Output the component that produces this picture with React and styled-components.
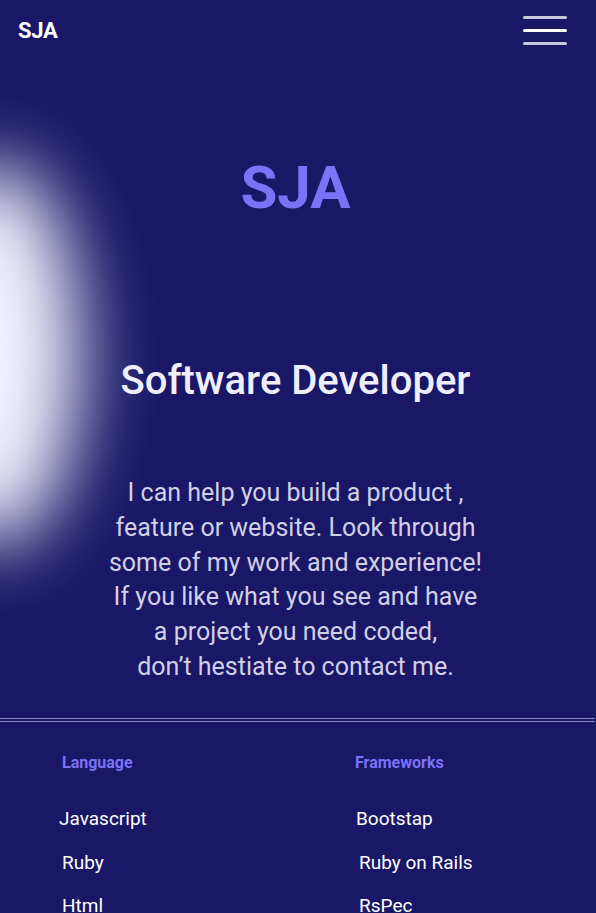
import React from "react";
import styled, { createGlobalStyle } from "styled-components";

const Global = createGlobalStyle`
  html, body { margin: 0; padding: 0; background: #1a1766; }
  body { font-family: Roboto, "Liberation Sans", sans-serif; overflow: hidden; }
  * { box-sizing: border-box; }
`;

const Page = styled.div`
  position: relative;
  width: 596px;
  min-height: 913px;
  background: #1a1766;
  overflow: hidden;
`;

const Header = styled.header`
  height: 60px;
  display: flex;
  align-items: center;
  justify-content: space-between;
  padding: 0 29px 0 18px;
  position: relative;
  z-index: 2;
`;

const Brand = styled.div`
  color: #ffffff;
  font-size: 22px;
  font-weight: 700;
  letter-spacing: -0.3px;
`;

const Burger = styled.button`
  background: none;
  border: 0;
  padding: 0;
  width: 44px;
  display: flex;
  flex-direction: column;
  gap: 10px;
  margin-top: 1px;
`;

const Bar = styled.span`
  display: block;
  height: 3px;
  border-radius: 2px;
  background: ${(p) => (p.$bright ? "#ffffff" : "#c9c9de")};
`;

const Hero = styled.section`
  position: relative;
  text-align: center;
  padding: 96px 5px 0 0;
  height: 658px;
`;

const Glow = styled.div`
  position: absolute;
  left: -92px;
  top: 102px;
  width: 172px;
  height: 385px;
  border-radius: 50%;
  background: #f2f2ff;
  filter: blur(38px);
  z-index: 0;
`;

const Title = styled.h1`
  position: relative;
  margin: 0;
  color: #7b73f6;
  font-size: 60px;
  font-weight: 700;
  line-height: 64px;
`;

const Role = styled.h2`
  position: relative;
  margin: 138px 0 0;
  color: #efeefe;
  font-size: 40px;
  font-weight: 500;
  line-height: 46px;
`;

const Intro = styled.p`
  position: relative;
  margin: 72px auto 0;
  color: #d1d0e6;
  font-size: 25px;
  line-height: 34.8px;
`;

const Divider = styled.hr`
  margin: 0;
  border: 0;
  height: 4px;
  width: 595px;
  border-top: 1px solid #8a88b0;
  border-bottom: 1px solid #8a88b0;
`;

const Skills = styled.section`
  display: grid;
  grid-template-columns: 293px 1fr;
  padding: 31px 0 0 59px;
`;

const Column = styled.div`
  display: flex;
  flex-direction: column;
`;

const Heading = styled.h3`
  margin: 0 0 0 3px;
  color: #7b73f6;
  font-size: 16px;
  font-weight: 700;
  line-height: 20px;
`;

const List = styled.ul`
  list-style: none;
  margin: 35px 0 0;
  padding: 0;
  display: flex;
  flex-direction: column;
  gap: 21.5px;
`;

const Item = styled.li`
  color: #ffffff;
  font-size: 19px;
  line-height: 22px;
  padding-left: ${(p) => p.$indent || 0}px;
`;

export default function App() {
  return (
    <Page>
      <Global />
      <Header>
        <Brand>SJA</Brand>
        <Burger aria-label="menu">
          <Bar />
          <Bar $bright />
          <Bar />
        </Burger>
      </Header>
      <Hero>
        <Glow />
        <Title>SJA</Title>
        <Role>Software Developer</Role>
        <Intro>
          I can help you build a product ,<br />
          feature or website. Look through<br />
          some of my work and experience!<br />
          If you like what you see and have<br />
          a project you need coded,<br />
          don’t hestiate to contact me.
        </Intro>
      </Hero>
      <Divider />
      <Skills>
        <Column>
          <Heading>Language</Heading>
          <List>
            <Item>Javascript</Item>
            <Item $indent={3}>Ruby</Item>
            <Item $indent={3}>Html</Item>
          </List>
        </Column>
        <Column>
          <Heading>Frameworks</Heading>
          <List>
            <Item $indent={4}>Bootstap</Item>
            <Item $indent={7}>Ruby on Rails</Item>
            <Item $indent={7}>RsPec</Item>
          </List>
        </Column>
      </Skills>
    </Page>
  );
}
